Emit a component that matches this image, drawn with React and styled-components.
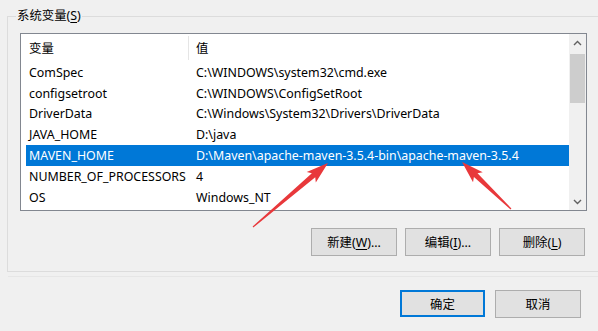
import React from "react";
import styled, { createGlobalStyle } from "styled-components";

const GlobalStyle = createGlobalStyle`
  html, body {
    margin: 0;
    padding: 0;
    background: #f0f0f0;
    overflow: hidden;
  }
  body {
    font-family: "Noto Sans", "Noto Sans CJK SC", sans-serif;
    font-size: 12.4px;
    color: #000;
  }
`;

const ROWS = [
  ["ComSpec", "C:\\WINDOWS\\system32\\cmd.exe"],
  ["configsetroot", "C:\\WINDOWS\\ConfigSetRoot"],
  ["DriverData", "C:\\Windows\\System32\\Drivers\\DriverData"],
  ["JAVA_HOME", "D:\\java"],
  ["MAVEN_HOME", "D:\\Maven\\apache-maven-3.5.4-bin\\apache-maven-3.5.4"],
  ["NUMBER_OF_PROCESSORS", "4"],
  ["OS", "Windows_NT"],
];

const SELECTED = 4;

function Arrow({ from, to }) {
  const dx = to[0] - from[0];
  const dy = to[1] - from[1];
  const len = Math.sqrt(dx * dx + dy * dy);
  const angle = (Math.atan2(dy, dx) * 180) / Math.PI;
  const pts = [
    [0, -0.6],
    [len - 19, -2.6],
    [len - 22, -7],
    [len, 0],
    [len - 22, 7],
    [len - 19, 2.6],
    [0, 0.6],
  ]
    .map((p) => p.join(","))
    .join(" ");
  return (
    <polygon
      points={pts}
      fill="#e8383b"
      transform={`translate(${from[0]} ${from[1]}) rotate(${angle})`}
    />
  );
}

export default function App() {
  return (
    <>
      <GlobalStyle />
      <Page>
        <Group>
          <GroupTitle>
            系统变量(<u>S</u>)
          </GroupTitle>
          <ListBox>
            <ListBody>
              <HeaderRow>
                <NameCell>变量</NameCell>
                <Divider />
                <ValueCell>值</ValueCell>
              </HeaderRow>
              {ROWS.map(([name, value], i) => (
                <Row key={name} selected={i === SELECTED}>
                  <NameCell>{name}</NameCell>
                  <ValueCell>{value}</ValueCell>
                </Row>
              ))}
            </ListBody>
            <ScrollBar>
              <ScrollArrow>
                <Chevron viewBox="0 0 9 6">
                  <path d="M1 5 L4.5 1.5 L8 5" />
                </Chevron>
              </ScrollArrow>
              <Track>
                <Thumb />
              </Track>
              <ScrollArrow>
                <Chevron viewBox="0 0 9 6">
                  <path d="M1 1 L4.5 4.5 L8 1" />
                </Chevron>
              </ScrollArrow>
            </ScrollBar>
          </ListBox>
          <ButtonRow>
            <Button>
              新建(<u>W</u>)...
            </Button>
            <Button>
              编辑(<u>I</u>)...
            </Button>
            <Button>
              删除(<u>L</u>)
            </Button>
          </ButtonRow>
        </Group>
        <Separator />
        <DialogButtons>
          <Button width={85} primary>
            确定
          </Button>
          <Button width={86}>取消</Button>
        </DialogButtons>
      </Page>
      <Overlay width="598" height="331">
        <Arrow from={[253, 227]} to={[328, 163]} />
        <Arrow from={[511, 209]} to={[462, 162]} />
      </Overlay>
    </>
  );
}

const Page = styled.div`
  width: 598px;
  height: 331px;
  padding-top: 16px;
  box-sizing: border-box;
  overflow: hidden;
`;

const Group = styled.div`
  position: relative;
  margin-left: 7px;
  width: 620px;
  border: 1px solid #dcdcdc;
  border-right: none;
  padding: 16px 0 15px 12px;
  box-sizing: border-box;
`;

const GroupTitle = styled.div`
  position: absolute;
  top: -10px;
  left: 8px;
  padding: 0 1px;
  background: #f0f0f0;
  line-height: 18px;
  u {
    text-decoration-thickness: 1px;
    text-underline-offset: 2px;
  }
`;

const ListBox = styled.div`
  display: flex;
  width: 567px;
  height: 178px;
  border: 1px solid #828790;
  background: #fff;
  box-sizing: border-box;
`;

const ListBody = styled.div`
  flex: 1;
  padding-left: 5px;
  overflow: hidden;
`;

const HeaderRow = styled.div`
  position: relative;
  display: flex;
  align-items: center;
  height: 28px;
`;

const Divider = styled.div`
  position: absolute;
  left: 162px;
  top: 2px;
  bottom: 2px;
  width: 1px;
  background: #e5e5e5;
`;

const Row = styled.div`
  display: flex;
  align-items: center;
  height: 20.8px;
  background: ${(p) => (p.selected ? "#0078d7" : "transparent")};
  color: ${(p) => (p.selected ? "#fff" : "#000")};
`;

const NameCell = styled.div`
  width: 167px;
  padding-left: 3px;
  box-sizing: border-box;
  white-space: nowrap;
`;

const ValueCell = styled.div`
  flex: 1;
  padding-left: 3px;
  white-space: nowrap;
`;

const ScrollBar = styled.div`
  display: flex;
  flex-direction: column;
  width: 17px;
  background: #f0f0f0;
`;

const ScrollArrow = styled.div`
  display: flex;
  align-items: center;
  justify-content: center;
  height: 17px;
`;

const Chevron = styled.svg`
  width: 9px;
  height: 6px;
  fill: none;
  stroke: #606060;
  stroke-width: 1.4;
`;

const Track = styled.div`
  flex: 1;
  padding: 3px 1px 0;
`;

const Thumb = styled.div`
  height: 49px;
  background: #cdcdcd;
`;

const ButtonRow = styled.div`
  display: flex;
  justify-content: flex-start;
  gap: 8px;
  margin: 17px 0 0 291px;
`;

const Button = styled.button`
  width: ${(p) => p.width || 86}px;
  height: ${(p) => (p.primary ? 27 : 28)}px;
  padding: 0;
  font: inherit;
  color: #000;
  background: #e1e1e1;
  border: ${(p) => (p.primary ? "2px solid #0078d7" : "1px solid #adadad")};
  box-sizing: border-box;
  u {
    text-decoration-thickness: 1px;
    text-underline-offset: 2px;
  }
`;

const Separator = styled.div`
  margin: 4px 0 0 8px;
  height: 1px;
  background: #e6e6e6;
`;

const DialogButtons = styled.div`
  display: flex;
  justify-content: flex-end;
  gap: 10px;
  margin: 13px 17px 0 0;
`;

const Overlay = styled.svg`
  position: absolute;
  left: 0;
  top: 0;
  pointer-events: none;
`;
